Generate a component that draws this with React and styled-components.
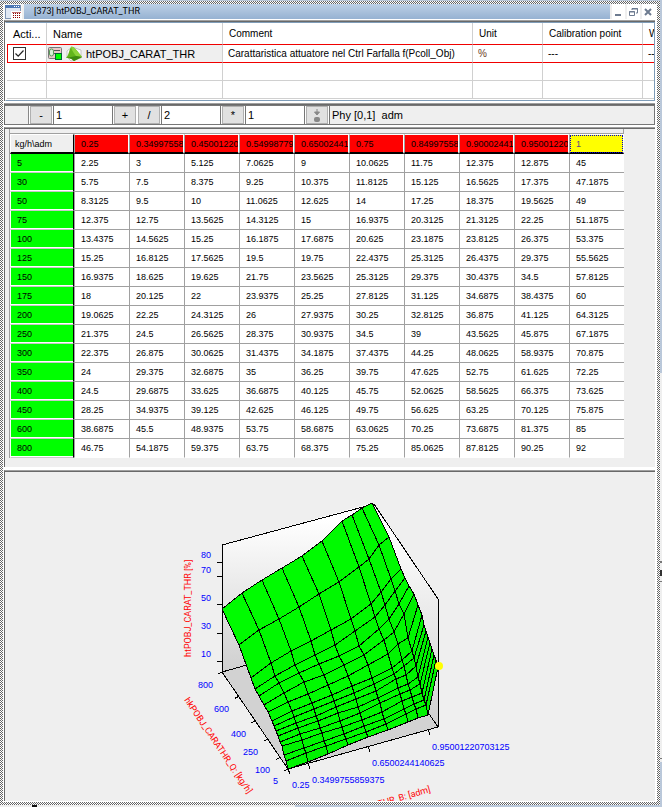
import React from "react";
import styled, { createGlobalStyle, css } from "styled-components";

const COLUMNS = [
  "0.25",
  "0.34997558",
  "0.45001220",
  "0.54998779",
  "0.65002441",
  "0.75",
  "0.84997558",
  "0.90002441",
  "0.95001220",
  "1",
];

const ROWS = [
  [5, 2.25, 3, 5.125, 7.0625, 9, 10.0625, 11.75, 12.375, 12.875, 45],
  [30, 5.75, 7.5, 8.375, 9.25, 10.375, 11.8125, 15.125, 16.5625, 17.375, 47.1875],
  [50, 8.3125, 9.5, 10, 11.0625, 12.625, 14, 17.25, 18.375, 19.5625, 49],
  [75, 12.375, 12.75, 13.5625, 14.3125, 15, 16.9375, 20.3125, 21.3125, 22.25, 51.1875],
  [100, 13.4375, 14.5625, 15.25, 16.1875, 17.6875, 20.625, 23.1875, 23.8125, 26.375, 53.375],
  [125, 15.25, 16.8125, 17.5625, 19.5, 19.75, 22.4375, 25.3125, 26.4375, 29.375, 55.5625],
  [150, 16.9375, 18.625, 19.625, 21.75, 23.5625, 25.3125, 29.375, 30.4375, 34.5, 57.8125],
  [175, 18, 20.125, 22, 23.9375, 25.25, 27.8125, 31.125, 34.6875, 38.4375, 60],
  [200, 19.0625, 22.25, 24.3125, 26, 27.9375, 30.25, 32.8125, 36.875, 41.125, 64.3125],
  [250, 21.375, 24.5, 26.5625, 28.375, 30.9375, 34.5, 39, 43.5625, 45.875, 67.1875],
  [300, 22.375, 26.875, 30.0625, 31.4375, 34.1875, 37.4375, 44.25, 48.0625, 58.9375, 70.875],
  [350, 24, 29.375, 32.6875, 35, 36.25, 39.75, 47.625, 52.75, 61.625, 72.25],
  [400, 24.5, 29.6875, 33.625, 36.6875, 40.125, 45.75, 52.0625, 58.5625, 66.375, 73.625],
  [450, 28.25, 34.9375, 39.125, 42.625, 46.125, 49.75, 56.625, 63.25, 70.125, 75.875],
  [600, 38.6875, 45.5, 48.9375, 53.75, 58.6875, 63.0625, 70.25, 73.6875, 81.375, 85],
  [800, 46.75, 54.1875, 59.375, 63.75, 68.375, 75.25, 85.0625, 87.8125, 90.25, 92],
];

const Global = createGlobalStyle`
  * { box-sizing: border-box; }
  body { margin: 0; font-family: "Liberation Sans", Arial, sans-serif; font-size: 10px; color: #000; }
  button, input { font: inherit; color: inherit; margin: 0; border-radius: 0; }
`;

const Desktop = styled.div`
  min-height: 100vh;
  display: flex;
  padding: 1px 2px 2px 0;
  background:
    linear-gradient(#101010, #101010) 32px 100% / 5px 2px no-repeat,
    linear-gradient(#efefef, #efefef) 0 100% / 295px 2px no-repeat,
    linear-gradient(#bac8da 373px, #efefef 373px, #efefef 561px, #777 561px, #777 563px, #efefef 563px, #efefef 570px, #333 570px, #333 576px, #efefef 576px, #efefef 581px, #777 581px, #777 582px, #efefef 582px, #efefef 758px, #777 758px, #777 759px, #efefef 759px, #efefef 762px, #bac8da 762px)
      100% 0 / 2px 100% no-repeat,
    #bac8da;
`;

const SizingFrame = styled.div`
  flex: 1;
  min-width: 0;
  display: flex;
  padding: 3px;
  background: repeating-conic-gradient(#666 0 25%, #fff 0 50%) 0 0 / 2px 2px;
`;

const Window = styled.main`
  flex: 1;
  min-width: 0;
  display: flex;
  flex-direction: column;
  gap: 1px;
  padding: 0 2px 1px 1px;
  background: #fff;
`;

const TitleBar = styled.header`
  display: flex;
  align-items: stretch;
  height: 15px;
  background: #efefef;
`;

const TitleIcon = styled.div`
  width: 20px;
  overflow: visible;
  svg { display: block; }
`;

const Title = styled.h1`
  flex: 1;
  margin: 0;
  padding-left: 10px;
  font-family: Roboto, "Liberation Sans", sans-serif;
  font-size: 9px;
  font-weight: 400;
  line-height: 15px;
  background: linear-gradient(#bdd0e6, #96b2d2);
`;

const WindowButtons = styled.div`
  display: flex;
  gap: 2px;
  padding-left: 2px;
`;

const WindowButton = styled.button`
  width: 13px;
  height: 15px;
  padding: 0;
  border: 0;
  background: #fff;
  svg { display: block; }
`;

const Panel = styled.section`
  border-left: 1px solid #696969;
  border-top: 1px solid #a0a0a0;
  box-shadow: inset 0 1px #696969;
  padding-top: 1px;
  background: #efefef;
  margin-bottom: ${(p) => p.$gap || 0}px;
  ${(p) => p.$grow && css`flex: 1 0 auto;`}
`;

const ListBox = styled.div`
  border: 1px solid #7f9db9;
  border-left-color: #fff;
  padding: 0 0 1px 1px;
  background: #fff;
  overflow: hidden;
`;

const List = styled.table`
  width: 100%;
  table-layout: fixed;
  border-collapse: separate;
  border-spacing: 0;
  font-size: 11px;
`;

const ListHead = styled.th`
  height: 21px;
  width: ${(p) => (p.$w ? p.$w + "px" : "auto")};
  padding: 0 0 0 6px;
  border-right: 1px solid #d0d0d0;
  text-align: left;
  font-size: ${(p) => p.$size || 11}px;
  font-weight: 400;
  white-space: nowrap;
  overflow: hidden;
  &:last-child { border-right: 0; }
`;

const ListCell = styled.td`
  height: 18px;
  padding: 0 0 0 5px;
  line-height: 16px;
  border-right: 1px solid #d0d0d0;
  border-bottom: 1px solid #d0d0d0;
  white-space: nowrap;
  overflow: hidden;
  font-size: ${(p) => p.$size || 11}px;
  color: ${(p) => (p.$unit ? "#6b3a1e" : "#000")};
  &:last-child { border-right: 0; }
  ${(p) => p.$active && css`
    height: 19px;
    border-top: 1px solid #f00000;
    border-bottom-color: #f00000;
    &:first-child { border-left: 1px solid #f00000; }
  `}
  ${(p) => p.$shaded && css`background: #efefef; padding-left: 1px;`}
`;

const Tick = styled.input`
  appearance: none;
  display: block;
  width: 13px;
  height: 13px;
  border: 1px solid #333;
  background: #fff;
  &:checked {
    background: #fff url("data:image/svg+xml,%3Csvg xmlns='http://www.w3.org/2000/svg' viewBox='0 0 11 11'%3E%3Cpath d='M1.5 5.5l2.7 2.7L9.5 2.5' fill='none' stroke='%23222' stroke-width='1.2'/%3E%3C/svg%3E");
  }
`;

const NameLine = styled.div`
  display: flex;
  align-items: center;
  gap: 3px;
  svg { display: block; flex: none; }
`;

const Toolbar = styled.div`
  display: flex;
  align-items: stretch;
  height: 20px;
  gap: 1px;
  border: solid #777;
  border-width: 1px 1px 1px 0;
  background: #fff;
`;

const Slot = styled.div`
  width: 24px;
  border-right: 1px solid #888;
  background: #efefef;
`;

const ToolButton = styled.button`
  width: 22px;
  padding: 0;
  margin-left: ${(p) => p.$lead || 0}px;
  border: 1px solid #b0b0b0;
  background: #e1e1e1;
  font-size: 11px;
  line-height: 14px;
  svg { display: block; margin: 0 auto; }
`;

const Amount = styled.input`
  width: 60px;
  min-width: 0;
  padding: 0 2px;
  border: 1px solid #777;
  border-top: 0;
  border-bottom: 0;
  background: #fff;
  font-size: 11px;
`;

const Status = styled.output`
  flex: 1;
  padding-left: 2px;
  border-left: 1px solid #777;
  background: #efefef;
  font-size: 11px;
  line-height: 18px;
  white-space: pre;
`;

const MapBox = styled.div`
  display: flex;
  padding: 0 0 9px 4px;
  overflow: hidden;
`;

const MapFrame = styled.div`
  border-left: 1px solid #a0a0a0;
`;

const ColumnStrip = styled.div`
  height: 5px;
  border: solid #a0a0a0;
  border-width: 0 1px 1px 0;
`;

const MapTable = styled.table`
  width: 614px;
  table-layout: fixed;
  border-collapse: separate;
  border-spacing: 0;
  font-size: 9px;
`;

const cell = css`
  padding: 0 0 0 6px;
  text-align: left;
  font-weight: 400;
  white-space: nowrap;
  overflow: hidden;
`;

const Corner = styled.th`
  ${cell}
  width: 64px;
  height: 20px;
  padding-left: 4px;
  border: solid #fff;
  border-width: 1px 0 0 1px;
  border-right: 1px solid #000;
  border-bottom: 2px solid #000;
  background: #efefef;
`;

const Breakpoint = styled.th`
  ${cell}
  border-left: 1px solid #a0a0a0;
  border-right: 1px solid #fff;
  border-top: 1px solid #fff;
  border-bottom: 2px solid #000;
  background: #f00;
  ${(p) => p.$selected && css`
    background: #ff0;
    color: #5a4a80;
    outline: 1px dotted #00c;
    outline-offset: -2px;
  `}
`;

const RowHead = styled.th`
  ${cell}
  height: 19px;
  border-left: 1px solid #fff;
  border-right: 1px solid #000;
  border-bottom: 1px solid #c8c8c8;
  box-shadow: inset 0 -1px #fff;
  background: #0f0;
`;

const Value = styled.td`
  ${cell}
  border-left: 1px solid #a0a0a0;
  border-bottom: 1px solid #a0a0a0;
  background: #fff;
  tr:last-child & { border-bottom-color: #fff; }
`;

const Plot = styled.svg`
  display: block;
  width: 100%;
  height: 329px;
`;

const Label = styled.text`
  font-size: 9px;
  fill: #00f;
`;

const AxisTitle = styled.text`
  font-family: Roboto, "Liberation Sans", sans-serif;
  font-size: 9px;
  fill: #f00;
`;

const AXIS_X = [0.25, 0.35, 0.45, 0.55, 0.65, 0.75, 0.85, 0.9, 0.95, 1];
const Z_MIN = 2.25;

function project(x, y, z) {
  const u = (x - 0.25) / 0.75;
  const v = (y - 5) / 795;
  return [288 + 150 * u - 66 * v, 769 - 42 * u - 97 * v - 1.415 * (z - Z_MIN)];
}

function surfaceQuads() {
  const quads = [];
  for (let r = ROWS.length - 2; r >= 0; r--) {
    for (let c = AXIS_X.length - 2; c >= 0; c--) {
      const corner = (i, j) => project(AXIS_X[j], ROWS[i][0], ROWS[i][j + 1]);
      const points = [corner(r, c), corner(r, c + 1), corner(r + 1, c + 1), corner(r + 1, c)];
      const slope = (ROWS[r + 1][c + 1] - ROWS[r][c + 1]) / (ROWS[r + 1][0] - ROWS[r][0]);
      quads.push({
        key: `${r}-${c}`,
        points: points.map((p) => p.map((n) => Math.round(n)).join(",")).join(" "),
        fill: `rgb(0,${Math.round(255 - Math.min(18, slope * 80))},0)`,
      });
    }
  }
  return quads;
}

const QUADS = surfaceQuads();

const TICK_LABELS = [
  [201, 558, "80"], [201, 573, "70"], [201, 601, "50"], [201, 629, "30"], [201, 657, "10"],
  [198, 688, "800"], [214, 712, "600"], [231, 737, "400"], [243, 755, "250"], [255, 773, "100"],
  [273, 784, "5"], [292, 788, "0.25"], [312, 783, "0.3499755859375"],
  [372, 766, "0.6500244140625"], [432, 750, "0.95001220703125"],
];

function SurfacePlot() {
  return (
    <Plot viewBox="5 472 650 329" role="img" aria-label="Surface of htPOBJ_CARAT_THR">
      <defs>
        <linearGradient id="wall" x1="0" y1="0" x2="0" y2="1">
          <stop offset="0.1" stopColor="#fff" />
          <stop offset="1" stopColor="#cfcfcf" />
        </linearGradient>
      </defs>
      <polygon points="222,545 372,503 372,630 222,672" fill="url(#wall)" />
      <polygon points="372,503 438,599 438,727 372,630" fill="url(#wall)" />
      <polygon points="222,672 372,630 438,727 288,769" fill="#d2d2d2" />
      <g fill="none" stroke="#000" shapeRendering="crispEdges">
        <path d="M222 672L372 630L438 727" />
        <path d="M222 672V545L374 504L438 599V727L288 769L222 672" />
        {[80, 70, 50, 30, 10].map((z) => {
          const [x, y] = project(0.25, 800, z);
          return <path key={z} d={`M${x} ${Math.round(y)}h-5`} />;
        })}
        {[800, 600, 400, 250, 100, 5].map((v) => {
          const [x, y] = project(0.25, v, Z_MIN);
          return <path key={v} d={`M${x} ${y}l-4 2`} />;
        })}
        {[0.25, 0.35, 0.65, 0.95].map((v) => {
          const [x, y] = project(v, 5, Z_MIN);
          return <path key={v} d={`M${x} ${y}l2 5`} />;
        })}
        {QUADS.map((q) => (
          <polygon key={q.key} points={q.points} fill={q.fill} />
        ))}
      </g>
      <circle cx="439" cy="666" r="4" fill="#ff0" />
      {TICK_LABELS.map(([x, y, text]) => (
        <Label key={text} x={x} y={y}>{text}</Label>
      ))}
      <AxisTitle transform="translate(191 657) rotate(-90)">htPOBJ_CARAT_THR [%]</AxisTitle>
      <AxisTitle transform="translate(184 700) rotate(56)">hkPOBJ_CARATHR_Q: [kg/h]</AxisTitle>
      <AxisTitle textAnchor="end" transform="translate(431 792) rotate(-16)">hkPOBJ_CARATHR_B: [adm]</AxisTitle>
    </Plot>
  );
}

function WindowIcon() {
  return (
    <svg width="18" height="16" viewBox="0 0 18 16" shapeRendering="crispEdges">
      <rect width="18" height="16" fill="#f4f4f4" />
      <rect x="1" y="1" width="15" height="13" fill="#dfe7f3" stroke="#8096b4" />
      <rect x="1" y="1" width="15" height="3" fill="#4d78b5" />
      <path d="M10 2h1M12 2h1M14 2h1" stroke="#fff" />
      <rect x="7" y="7" width="11" height="9" fill="#fff" />
      <path d="M9 10h1M11 10h1M13 10h1M15 10h1M9 12h1M11 12h1M13 12h1M15 12h1M9 14h1M11 14h1M13 14h1M15 14h1" transform="translate(0 -.5)" stroke="#900000" />
      <path d="M8 8h9" stroke="#c07070" />
    </svg>
  );
}

function VariableIcon() {
  return (
    <svg width="15" height="15" viewBox="0 0 15 15">
      <rect x="0.5" y="1.5" width="13" height="11" rx="1" fill="#e9c9c9" stroke="#777" />
      <rect x="1.5" y="3" width="4" height="7" rx="2" fill="#d8f0d8" stroke="#5b9a5b" />
      <path d="M6 4.5h6M6 7.5h3" stroke="#555" />
      <rect x="7.5" y="7.5" width="6" height="6" fill="#0f0" stroke="#063" />
    </svg>
  );
}

function SurfaceIcon() {
  return (
    <svg width="17" height="16" viewBox="0 0 17 16">
      <path d="M1 5L6 1L15 4V12L5 15L1 11Z" fill="#fff" stroke="#c4c4c4" />
      <path d="M5 1C8 0 11 5 16 11L8 15C5 12 3 12 0 12C3 9 3 4 5 1Z" fill="#62b51c" />
      <path d="M5 1C8 0 11 5 16 11L10 10C8 7 6 5 5 1Z" fill="#8cd33a" />
      <path d="M0 12C3 12 5 12 8 15L16 11L10 10Z" fill="#3d8a10" />
    </svg>
  );
}

export default function App() {
  return (
    <>
      <Global />
      <Desktop>
        <SizingFrame>
          <Window>
            <TitleBar>
              <TitleIcon><WindowIcon /></TitleIcon>
              <Title>[373] htPOBJ_CARAT_THR</Title>
              <WindowButtons>
                <WindowButton aria-label="Minimize">
                  <svg width="13" height="15" viewBox="0 0 13 15"><path d="M3 11h6" stroke="#6d7b90" strokeWidth="2" /></svg>
                </WindowButton>
                <WindowButton aria-label="Restore">
                  <svg width="13" height="15" viewBox="0 0 13 15" fill="none" stroke="#6d7b90">
                    <path d="M5 6V4.500h5.500V9H9M5 5h6" />
                    <path d="M2.500 7.500h5v4h-5zM2 8h6" />
                  </svg>
                </WindowButton>
                <WindowButton aria-label="Close">
                  <svg width="13" height="15" viewBox="0 0 13 15"><path d="M3 5l6 6M9 5l-6 6" stroke="#6d7b90" strokeWidth="2" /></svg>
                </WindowButton>
              </WindowButtons>
            </TitleBar>

            <Panel $gap={1}>
              <ListBox>
                <List>
                  <thead>
                    <tr>
                      <ListHead $w={40}>Acti...</ListHead>
                      <ListHead $w={176}>Name</ListHead>
                      <ListHead $w={250} $size={10}>Comment</ListHead>
                      <ListHead $w={70} $size={10}>Unit</ListHead>
                      <ListHead $w={100} $size={10}>Calibration point</ListHead>
                      <ListHead $size={10}>W</ListHead>
                    </tr>
                  </thead>
                  <tbody>
                    <tr>
                      <ListCell $active><Tick type="checkbox" defaultChecked aria-label="Active" /></ListCell>
                      <ListCell $active $shaded>
                        <NameLine><VariableIcon /><SurfaceIcon />htPOBJ_CARAT_THR</NameLine>
                      </ListCell>
                      <ListCell $active $size={10}>Carattaristica attuatore nel Ctrl Farfalla f(Pcoll_Obj)</ListCell>
                      <ListCell $active $unit $size={10}>%</ListCell>
                      <ListCell $active $size={10}>---</ListCell>
                      <ListCell $active $size={10}>--</ListCell>
                    </tr>
                    {[1, 2].map((n) => (
                      <tr key={n}>
                        {[0, 1, 2, 3, 4, 5].map((c) => <ListCell key={c} />)}
                      </tr>
                    ))}
                  </tbody>
                </List>
              </ListBox>
            </Panel>

            <Panel as="div" $gap={1}>
              <Toolbar>
                <Slot />
                <ToolButton aria-label="Subtract">-</ToolButton>
                <Amount aria-label="Step" defaultValue="1" />
                <ToolButton aria-label="Add">+</ToolButton>
                <ToolButton aria-label="Divide" $lead={1}>/</ToolButton>
                <Amount aria-label="Factor" defaultValue="2" />
                <ToolButton aria-label="Multiply">*</ToolButton>
                <Amount aria-label="Value" defaultValue="1" />
                <ToolButton aria-label="Apply">
                  <svg width="12" height="15" viewBox="0 0 12 15"><path d="M6 1v5M3.500 4h5L6 7z" fill="#888" stroke="#888" /><rect x="3" y="9" width="6" height="5" rx="2" fill="#888" /></svg>
                </ToolButton>
                <Status>{"Phy [0,1]  adm"}</Status>
              </Toolbar>
            </Panel>

            <Panel $gap={2}>
              <MapBox>
                <MapFrame>
                  <ColumnStrip />
                  <MapTable>
                    <thead>
                      <tr>
                        <Corner>kg/h\adm</Corner>
                        {COLUMNS.map((c) => <Breakpoint key={c} $selected={c === "1"}>{c}</Breakpoint>)}
                      </tr>
                    </thead>
                    <tbody>
                      {ROWS.map(([head, ...values]) => (
                        <tr key={head}>
                          <RowHead scope="row">{head}</RowHead>
                          {values.map((v, i) => <Value key={i}>{v}</Value>)}
                        </tr>
                      ))}
                    </tbody>
                  </MapTable>
                </MapFrame>
              </MapBox>
            </Panel>

            <Panel $grow>
              <SurfacePlot />
            </Panel>
          </Window>
        </SizingFrame>
      </Desktop>
    </>
  );
}
